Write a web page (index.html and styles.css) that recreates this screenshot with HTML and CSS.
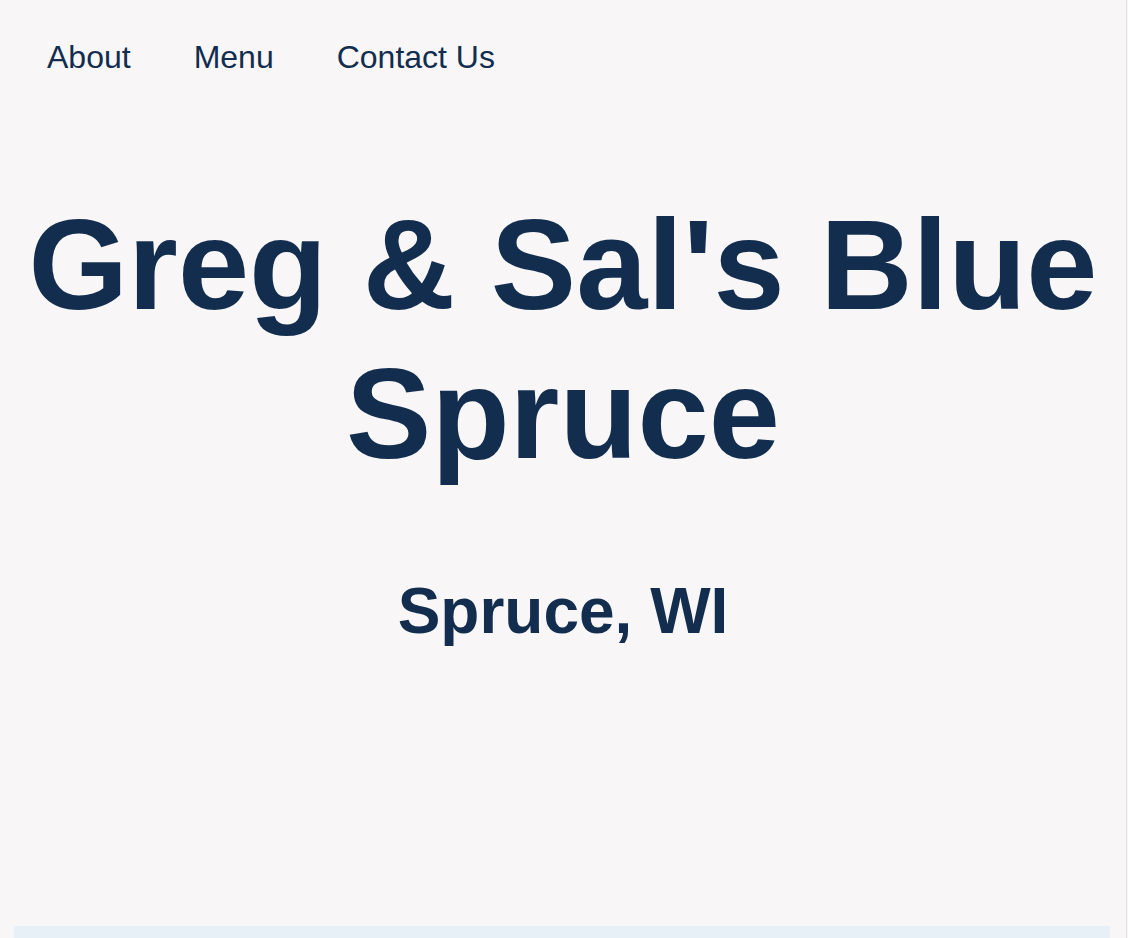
FILE: index.html
```html
<!DOCTYPE html>
<html lang="en">
<head>
<meta charset="utf-8">
<title>Greg &amp; Sal's Blue Spruce</title>
<link rel="stylesheet" href="styles.css">
</head>
<body>
<div class="page">
  <nav class="nav">
    <a class="nav-link" href="#about">About</a>
    <a class="nav-link" href="#menu">Menu</a>
    <a class="nav-link" href="#contact">Contact Us</a>
  </nav>
  <header class="hero">
    <h1 class="title">Greg &amp; Sal's Blue Spruce</h1>
    <h2 class="subtitle">Spruce, WI</h2>
  </header>
  <section class="band"></section>
</div>
</body>
</html>
```

FILE: styles.css
```css
html, body {
  margin: 0;
  padding: 0;
  background: #f8f6f7;
}
body {
  font-family: "Liberation Sans", Arial, Helvetica, sans-serif;
  color: #122d4e;
}
.page {
  width: 1126px;
  height: 938px;
  border-right: 1px solid #e2e0e1;
  overflow: hidden;
}
.nav {
  display: flex;
  gap: 63px;
  padding: 39px 0 0 47px;
  height: 37px;
}
.nav-link {
  color: #122d4e;
  text-decoration: none;
  font-size: 32px;
  line-height: 37px;
}
.hero {
  text-align: center;
  padding-bottom: 278px;
}
.title {
  margin: 114px 0 0;
  font-size: 128px;
  line-height: 149px;
  font-weight: 700;
}
.subtitle {
  margin: 86px 0 0;
  font-size: 64px;
  line-height: 74px;
  font-weight: 700;
}
.band {
  margin: 0 16px 0 14px;
  height: 12px;
  background: #e6f0f6;
}
```
